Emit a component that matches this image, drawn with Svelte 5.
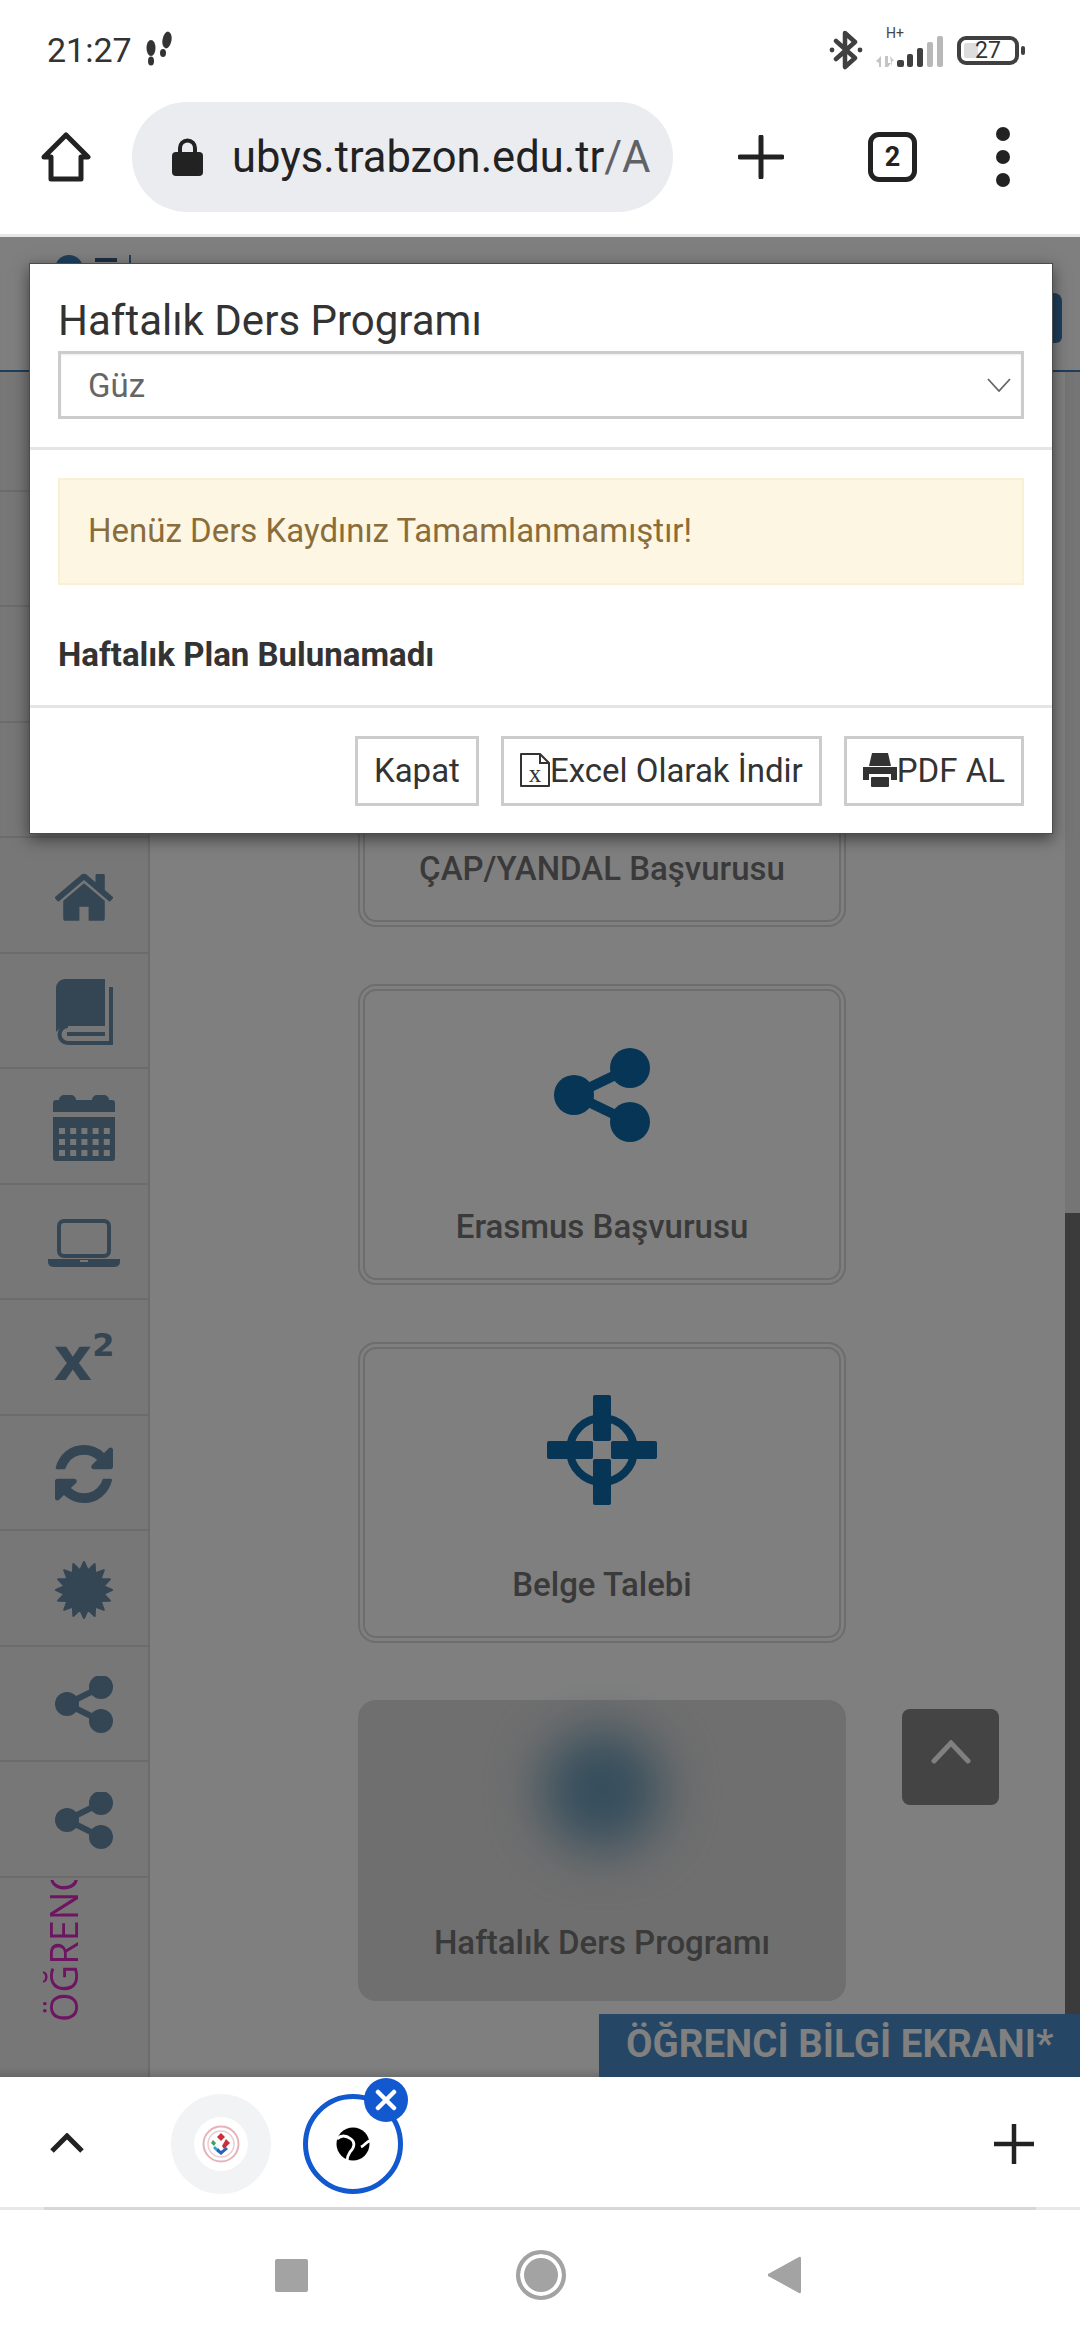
<script>
  const sideRows = ["", "", "", "", "home", "book", "calendar", "laptop", "sup", "sync", "badge", "share", "share"];

  const cards = [
    { label: "ÇAP/YANDAL Başvurusu", icon: "" },
    { label: "Erasmus Başvurusu", icon: "share" },
    { label: "Belge Talebi", icon: "cross" },
    { label: "Haftalık Ders Programı", icon: "blur" },
  ];

  const calCols = [0, 1, 2, 3, 4];
  const calRows = [0, 1, 2];

  // 16 pointed seal for the sidebar
  function sealPath() {
    const pts = [];
    for (let i = 0; i < 32; i++) {
      const r = i % 2 ? 20 : 28;
      const a = (i * Math.PI) / 16;
      pts.push((29 + r * Math.cos(a)).toFixed(1) + "," + (29 + r * Math.sin(a)).toFixed(1));
    }
    return pts.join(" ");
  }
</script>

<div class="phone">
  <div class="status">
    <div class="status-left">
      <span class="time">21:27</span>
      <svg class="steps" width="30" height="36" viewBox="0 0 30 36">
        <ellipse cx="7" cy="17" rx="4.5" ry="8" fill="#333" />
        <ellipse cx="7" cy="30" rx="3" ry="4.5" fill="#333" />
        <ellipse cx="23" cy="9" rx="4.5" ry="8.5" transform="rotate(10 23 9)" fill="#333" />
        <ellipse cx="19" cy="22" rx="3" ry="4" fill="#333" />
      </svg>
    </div>
    <div class="status-right">
      <svg class="bt" width="36" height="40" viewBox="0 0 36 40" fill="none" stroke="#404040" stroke-width="4.5" stroke-linejoin="round" stroke-linecap="round">
        <path d="M8 11 27 28 17 37V3L27 12 8 29" />
        <circle cx="4" cy="20" r="2.4" fill="#404040" stroke="none" />
        <circle cx="32" cy="20" r="2.4" fill="#404040" stroke="none" />
      </svg>
      <div class="signal">
        <span class="hplus">H+</span>
        <svg width="68" height="34" viewBox="0 0 68 34">
          <path d="M0 27l5-5v11H3v-4zM9 22h3v7h3l-3 4H9zM14 22l4 5h-2v6" fill="#c4c4c4" />
          <rect x="21" y="26" width="7" height="7" rx="2" fill="#404040" />
          <rect x="31" y="20" width="6" height="13" rx="2" fill="#404040" />
          <rect x="41" y="14" width="6" height="19" rx="2" fill="#404040" />
          <rect x="51" y="8" width="6" height="25" rx="2" fill="#b8b8b8" />
          <rect x="61" y="2" width="6" height="31" rx="2" fill="#b8b8b8" />
        </svg>
      </div>
      <div class="battery">
        <span class="battery-fill"></span>
        <span class="battery-num">27</span>
      </div>
      <span class="battery-nub"></span>
    </div>
  </div>

  <div class="toolbar">
    <svg class="home-btn" width="50" height="50" viewBox="0 0 50 50" fill="none" stroke="#222" stroke-width="5" stroke-linejoin="round">
      <path d="M25 3 47 25H40V47H10V25H3Z" />
    </svg>
    <div class="omnibox">
      <svg class="lock" width="31" height="38" viewBox="0 0 31 38">
        <path d="M8 16V10a7.500 7.500 0 0 1 15 0v6" fill="none" stroke="#222" stroke-width="4" />
        <rect x="0" y="14" width="31" height="24" rx="4" fill="#222" />
      </svg>
      <span class="url">ubys.trabzon.edu.tr<span class="url-rest">/A</span></span>
    </div>
    <svg class="tb-plus" width="46" height="44" viewBox="0 0 46 44" stroke="#222" stroke-width="5" stroke-linecap="round">
      <path d="M23 2V42M2 22H44" />
    </svg>
    <div class="tabs-btn">2</div>
    <div class="menu-dots"><i></i><i></i><i></i></div>
  </div>

  <div class="page">
    <div class="site-head">
      <span class="logo-dot"></span>
      <span class="logo-bar"></span>
      <span class="logo-line"></span>
      <span class="user-shape"></span>
    </div>

    <div class="site-body">
      <aside class="side">
        {#each sideRows as row}
          <div class="side-row">
            {#if row === "home"}
              <svg width="60" height="48" viewBox="64 230 1664 1310" preserveAspectRatio="none">
                <path fill="#688aa8" d="M1472 992v480q0 26-19 45t-45 19h-384v-384h-256v384h-384q-26 0-45-19t-19-45v-480q0-1 .5-3t.5-3l575-474 575 474q1 2 1 6zm223-69l-62 74q-8 9-21 11h-3q-13 0-21-7l-692-577-692 577q-12 8-24 7-13-2-21-11l-62-74q-8-10-7-23.5t11-21.5l719-599q32-26 76-26t76 26l244 204v-195q0-14 9-23t23-9h192q14 0 23 9t9 23v408l219 182q10 8 11 21.5t-7 23.5z" />
              </svg>
            {:else if row === "book"}
              <svg width="58" height="66" viewBox="0 0 58 66">
                <path fill="#688aa8" d="M1 9a9 9 0 0 1 9-9h40v47H13c-5 0-9 2-12 6z" />
                <path fill="none" stroke="#688aa8" stroke-width="4" d="M56 8V64H13a8.500 8.500 0 0 1 0-17" />
                <rect x="12" y="53" width="38" height="4" fill="#688aa8" />
              </svg>
            {:else if row === "calendar"}
              <svg width="62" height="66" viewBox="0 0 62 66">
                <path fill="#688aa8" d="M6 5a5 5 0 0 1 5-5h7a5 5 0 0 1 5 5h16a5 5 0 0 1 5-5h7a5 5 0 0 1 5 5h3a3 3 0 0 1 3 3v9H0V8a3 3 0 0 1 3-3z" />
                <path fill="#688aa8" d="M0 22h62v41a3 3 0 0 1-3 3H3a3 3 0 0 1-3-3z" />
                {#each calRows as y}
                  {#each calCols as x}
                    <rect x={6 + x * 11.200} y={33 + y * 11} width="6" height="6" fill="#eee" />
                  {/each}
                {/each}
              </svg>
            {:else if row === "laptop"}
              <svg width="72" height="48" viewBox="0 0 72 48">
                <rect x="11" y="2" width="50" height="35" rx="5" fill="none" stroke="#688aa8" stroke-width="4" />
                <path fill="#688aa8" d="M0 40h72v3a5 5 0 0 1-5 5H5a5 5 0 0 1-5-5z" />
                <rect x="32" y="41" width="8" height="2" fill="#eee" />
              </svg>
            {:else if row === "sup"}
              <span class="sup-icon">x<sup>2</sup></span>
            {:else if row === "sync"}
              <svg width="58" height="58" viewBox="128 128 1536 1536">
                <path fill="#688aa8" d="M1639 1056q0 5-1 7-64 268-268 434.500t-478 166.500q-146 0-282.500-55t-243.500-157l-129 129q-19 19-45 19t-45-19-19-45v-448q0-26 19-45t45-19h448q26 0 45 19t19 45-19 45l-137 137q71 66 161 102t187 36q134 0 250-65t186-179q11-17 53-117 8-23 30-23h192q13 0 22.500 9.500t9.500 22.500zm25-800v448q0 26-19 45t-45 19h-448q-26 0-45-19t-19-45 19-45l138-138q-148-137-349-137-134 0-250 65t-186 179q-11 17-53 117-8 23-30 23h-199q-13 0-22.500-9.500t-9.500-22.500v-7q65-268 270-434.500t480-166.500q146 0 284 55.500t245 156.500l130-129q19-19 45-19t45 19 19 45z" />
              </svg>
            {:else if row === "badge"}
              <svg width="58" height="58" viewBox="0 0 58 58">
                <polygon fill="#688aa8" stroke="#688aa8" stroke-width="2" stroke-linejoin="round" points={sealPath()} />
              </svg>
            {:else if row === "share"}
              <svg width="58" height="58" viewBox="0 0 58 58">
                <g fill="#688aa8">
                  <circle cx="12" cy="28" r="12" />
                  <circle cx="46" cy="11" r="12" />
                  <circle cx="46" cy="45" r="12" />
                </g>
                <path d="M12 28 46 11M12 28 46 45" stroke="#688aa8" stroke-width="6" />
              </svg>
            {/if}
          </div>
        {/each}
        <div class="side-title"><span>ÖĞRENCİ BİLGİ</span></div>
      </aside>

      <main class="cards">
        {#each cards as card}
          <div class="card" class:blurred={card.icon === "blur"}>
            <div class="card-icon">
              {#if card.icon === "share"}
                <svg width="96" height="96" viewBox="0 0 96 96">
                  <g fill="#0c6aaa">
                    <circle cx="20" cy="48" r="20" />
                    <circle cx="76" cy="21" r="20" />
                    <circle cx="76" cy="75" r="20" />
                  </g>
                  <path d="M20 48 76 21M20 48 76 75" stroke="#0c6aaa" stroke-width="10" />
                </svg>
              {:else if card.icon === "cross"}
                <svg class="cross" width="110" height="110" viewBox="0 0 110 110">
                  <circle cx="55" cy="55" r="32" fill="none" stroke="#0c6aaa" stroke-width="8" />
                  <g fill="#0c6aaa">
                    <rect x="46" y="0" width="18" height="46" rx="2" />
                    <rect x="46" y="64" width="18" height="46" rx="2" />
                    <rect x="0" y="46" width="46" height="18" rx="2" />
                    <rect x="64" y="46" width="46" height="18" rx="2" />
                  </g>
                </svg>
              {:else if card.icon === "blur"}
                <span class="blob"></span>
              {/if}
            </div>
            <div class="card-label">{card.label}</div>
          </div>
        {/each}
      </main>

      <div class="scroll-track"><span class="scroll-thumb"></span></div>
    </div>

    <div class="overlay"></div>
    <!-- these two sit on the dimmed page too, so they keep their place above content -->
    <button class="to-top" aria-label="Yukarı">
      <svg width="40" height="24" viewBox="0 0 40 24" fill="none" stroke="#808080" stroke-width="5" stroke-linecap="round"><path d="M3 21 20 3 37 21" /></svg>
    </button>
    <div class="banner">ÖĞRENCİ BİLGİ EKRANI*</div>

    <div class="modal">
      <div class="modal-head">
        <h4>Haftalık Ders Programı</h4>
        <div class="select">
          <span>Güz</span>
          <svg width="24" height="14" viewBox="0 0 24 14" fill="none" stroke="#666" stroke-width="1.800"><path d="M1 1 12 13 23 1" /></svg>
        </div>
      </div>
      <div class="modal-body">
        <div class="alert">Henüz Ders Kaydınız Tamamlanmamıştır!</div>
        <div class="no-plan">Haftalık Plan Bulunamadı</div>
      </div>
      <div class="modal-foot">
        <button class="btn">Kapat</button>
        <button class="btn">
          <svg width="30" height="34" viewBox="0 0 30 34" fill="none" stroke="#333" stroke-width="2">
            <path d="M1 1H20L29 10V33H1Z" stroke-linejoin="round" />
            <path d="M20 1V10H29" />
            <text x="15" y="29" font-size="25" font-family="'Liberation Serif', serif" text-anchor="middle" fill="#333" stroke="none">x</text>
          </svg>Excel Olarak İndir
        </button>
        <button class="btn">
          <svg width="34" height="34" viewBox="0 0 34 34" fill="#333">
            <path d="M9 0H25L28 13H6Z" />
            <path d="M0 14H34V27H28V21H6V27H0Z" />
            <rect x="8" y="24" width="18" height="10" rx="1" />
          </svg>PDF AL
        </button>
      </div>
    </div>
  </div>

  <div class="tabstrip">
    <svg class="strip-up" width="34" height="20" viewBox="0 0 34 20" fill="none" stroke="#222" stroke-width="5"><path d="M2 18 17 3 32 18" /></svg>
    <div class="tab-circle plain">
      <span class="favicon">
        <svg width="38" height="38" viewBox="0 0 38 38" fill="none">
          <circle cx="19" cy="19" r="17.500" stroke="#e3b4b8" stroke-width="2" />
          <circle cx="19" cy="19" r="13" stroke="#eccdd0" stroke-width="1.500" />
          <path d="M19 8l4 4-4 4-4-4z" fill="#c9303a" />
          <path d="M24 14l4 4-6 6-2-3z" fill="#c9303a" />
          <path d="M11 15l3 3-2 3-3-3z" fill="#3da35a" />
          <path d="M13 21l3 3-2 2-3-3z" fill="#2aa8c4" />
          <path d="M14 26l5 4 7-6-2-2-5 4-3-3z" fill="#2a62b8" />
        </svg>
      </span>
    </div>
    <div class="tab-circle active">
      <svg width="34" height="34" viewBox="0 0 34 34">
        <circle cx="17" cy="17" r="16.500" fill="#000" />
        <path d="M1 12C6 7 11 9 15 12 19 15 19 20 14 25 12 28 11 30 11 34M34 14C31 14 29 18 25 20" fill="none" stroke="#fff" stroke-width="2.800" />
      </svg>
      <span class="tab-close">
        <svg width="22" height="22" viewBox="0 0 22 22" stroke="#fff" stroke-width="4.500" stroke-linecap="round"><path d="M3 3 19 19M19 3 3 19" /></svg>
      </span>
    </div>
    <svg class="strip-plus" width="40" height="40" viewBox="0 0 40 40" stroke="#222" stroke-width="4.500"><path d="M20 0V40M0 20H40" /></svg>
  </div>

  <div class="navbar">
    <span class="nav-square"></span>
    <span class="nav-circle"></span>
    <svg class="nav-back" width="33" height="38" viewBox="0 0 33 38"><path d="M31 1a1.500 1.500 0 0 1 2 1V36a1.500 1.500 0 0 1-2 1L1 20.500a1.500 1.500 0 0 1 0-3z" fill="#a3a3a3" /></svg>
  </div>
</div>

<style>
  :global(body) {
    margin: 0;
    background: #fff;
  }
  .phone {
    width: 1080px;
    height: 2340px;
    display: flex;
    flex-direction: column;
    overflow: hidden;
    font-family: Roboto, "Liberation Sans", sans-serif;
    color: #333;
  }

  /* status bar */
  .status {
    height: 100px;
    flex: none;
    display: flex;
    justify-content: space-between;
    align-items: center;
    padding: 0 55px 0 47px;
  }
  .status-left { display: flex; align-items: center; gap: 12px; }
  .time { font-size: 34px; color: #333; }
  .steps { margin-top: -2px; }
  .status-right { display: flex; align-items: center; }
  .signal { position: relative; width: 68px; height: 34px; margin-left: 12px; margin-top: 2px; }
  .signal svg { display: block; }
  .hplus {
    position: absolute;
    left: 10px;
    top: -9px;
    font-size: 14px;
    line-height: 16px;
    color: #444;
  }
  .battery {
    position: relative;
    width: 62px;
    height: 29px;
    margin-left: 13px;
    box-sizing: border-box;
    border: 4px solid #404040;
    border-radius: 9px;
    display: flex;
    align-items: center;
    justify-content: center;
  }
  .battery-fill {
    position: absolute;
    left: 3px;
    top: 3px;
    bottom: 3px;
    width: 14px;
    background: #ddd;
    border-radius: 2px;
  }
  .battery-num { position: relative; font-size: 23px; line-height: 21px; color: #333; }
  .battery-nub { width: 4px; height: 9px; margin-left: 2px; background: #404040; border-radius: 2px; }

  /* browser toolbar */
  .toolbar {
    height: 114px;
    flex: none;
    display: flex;
    align-items: center;
    padding: 0 0 20px 41px;
    border-bottom: 3px solid #e6e6e6;
  }
  .omnibox {
    width: 541px;
    height: 110px;
    margin-left: 41px;
    padding-left: 40px;
    box-sizing: border-box;
    display: flex;
    align-items: center;
    gap: 29px;
    background: #ebecf0;
    border-radius: 55px;
    overflow: hidden;
  }
  .lock { flex: none; }
  .url { font-size: 43.5px; color: #222; white-space: nowrap; }
  .url-rest { color: #5f6368; }
  .tb-plus { margin-left: 65px; }
  .tabs-btn {
    width: 49px;
    height: 50px;
    margin-left: 84px;
    box-sizing: border-box;
    border: 5px solid #222;
    border-radius: 11px;
    display: flex;
    align-items: center;
    justify-content: center;
    font-size: 27px;
    font-weight: 700;
    color: #222;
  }
  .menu-dots {
    margin-left: 79px;
    display: flex;
    flex-direction: column;
    gap: 9px;
  }
  .menu-dots i { width: 14px; height: 14px; border-radius: 50%; background: #222; }

  /* dimmed page */
  .page {
    position: relative;
    height: 1840px;
    flex: none;
    overflow: hidden;
    background: #fff;
  }
  .site-head {
    height: 115px;
    display: flex;
    align-items: flex-start;
    border-bottom: 2px solid #3c7eb8;
    padding: 18px 0 0 55px;
  }
  .logo-dot { width: 28px; height: 28px; border-radius: 50%; background: #3c7eb8; }
  .logo-bar { width: 22px; height: 4px; margin: 3px 0 0 12px; background: #3a5f80; }
  .logo-line { width: 2px; height: 20px; margin-left: 12px; background: #3c7eb8; }
  .user-shape {
    width: 30px;
    height: 50px;
    margin: 38px 18px 0 auto;
    background: #3c7eb8;
    border-radius: 12px 8px 6px 6px;
  }
  .site-body {
    display: flex;
    height: 1705px;
  }
  .side {
    width: 150px;
    flex: none;
    box-sizing: border-box;
    padding-top: 4px;
    background: #eee;
    border-right: 2px solid #d8d8d8;
  }
  .side-row {
    height: 115.500px;
    box-sizing: border-box;
    border-bottom: 2px solid #d8d8d8;
    display: flex;
    align-items: center;
    justify-content: center;
    padding: 4px 0 0 20px;
  }
  .side-row svg { display: block; }
  .sup-icon {
    font-family: "DejaVu Sans", sans-serif;
    font-size: 60px;
    line-height: 1;
    font-weight: 700;
    color: #688aa8;
  }
  .sup-icon sup { font-size: 32px; font-weight: 700; vertical-align: 24px; line-height: 0; }
  .side-title {
    height: 142px;
    margin: 2px 0 0 43px;
  }
  .side-title span {
    display: block;
    height: 142px;
    overflow: hidden;
    white-space: nowrap;
    writing-mode: vertical-rl;
    transform: rotate(180deg);
    font-family: "Open Sans", sans-serif;
    font-size: 38px;
    line-height: 40px;
    color: #da2ac0;
  }
  .cards {
    flex: 1;
    display: flex;
    flex-direction: column;
    gap: 57px;
    padding: 254px 0 0 208px;
  }
  .card {
    width: 488px;
    height: 301px;
    flex: none;
    box-sizing: border-box;
    border: 7px double #dadada;
    border-radius: 18px;
    display: flex;
    flex-direction: column;
    align-items: center;
  }
  .card-icon {
    height: 194px;
    display: flex;
    align-items: flex-end;
    justify-content: center;
    flex: none;
    padding-bottom: 42px;
    box-sizing: border-box;
  }
  .card-icon svg { display: block; }
  .card-icon .cross { margin-bottom: -4px; }
  .card-label {
    font-size: 33px;
    font-weight: 500;
    line-height: 40px;
    color: #747474;
    margin-top: 22px;
    white-space: nowrap;
  }
  .card.blurred {
    border: none;
    background: #dedede;
    padding-top: 7px;
  }
  .blob {
    display: block;
    width: 120px;
    height: 120px;
    border-radius: 50%;
    background: #6a9ab8;
    filter: blur(26px);
    margin-bottom: 9px;
  }
  .scroll-track {
    width: 15px;
    margin-left: auto;
    flex: none;
    position: relative;
    background: #ebebeb;
  }
  .scroll-thumb {
    position: absolute;
    left: 0;
    right: 0;
    top: 841px;
    bottom: 0;
    background: #767676;
  }
  .overlay {
    position: absolute;
    inset: 0;
    background: rgba(0, 0, 0, 0.5);
    box-shadow: inset 0 -10px 10px -8px rgba(0, 0, 0, 0.2);
  }
  .to-top {
    position: absolute;
    left: 902px;
    top: 1472px;
    width: 97px;
    height: 96px;
    border: none;
    border-radius: 8px;
    background: #444;
    padding: 0 0 10px;
    display: flex;
    align-items: center;
    justify-content: center;
  }
  .banner {
    position: absolute;
    left: 599px;
    right: 0;
    bottom: 0;
    height: 63px;
    padding-left: 27px;
    background: #254664;
    color: #808080;
    font-size: 38.5px;
    font-weight: 700;
    line-height: 60px;
    white-space: nowrap;
  }

  /* modal */
  .modal {
    position: absolute;
    left: 29px;
    top: 26px;
    width: 1024px;
    box-sizing: border-box;
    background: #fff;
    border: 1px solid #4c4c4c;
    box-shadow: 0 5px 15px rgba(0, 0, 0, 0.5);
  }
  .modal-head {
    padding: 27px 28px 28px;
    border-bottom: 3px solid #e5e5e5;
  }
  h4 {
    margin: 0;
    font-size: 42px;
    font-weight: 400;
    line-height: 60px;
    color: #333;
    white-space: nowrap;
  }
  .select {
    height: 68px;
    box-sizing: border-box;
    border: 3px solid #ccc;
    display: flex;
    align-items: center;
    justify-content: space-between;
    padding: 0 10px 0 27px;
    font-size: 33px;
    color: #666;
    box-shadow: inset 0 1px 2px rgba(0, 0, 0, 0.08);
  }
  .modal-body { padding: 28px 28px 0; }
  .alert {
    height: 107px;
    box-sizing: border-box;
    border: 2px solid #faf0d4;
    background: #fdf6e3;
    color: #8a6d3b;
    padding: 0 0 3px 28px;
    display: flex;
    align-items: center;
    font-size: 33px;
  }
  .no-plan {
    height: 120px;
    box-sizing: border-box;
    padding-top: 19px;
    display: flex;
    align-items: center;
    font-size: 33px;
    font-weight: 700;
    color: #333;
  }
  .modal-foot {
    border-top: 3px solid #e5e5e5;
    padding: 28px 28px 27px;
    display: flex;
    justify-content: flex-end;
    gap: 22px;
  }
  .btn {
    height: 70px;
    box-sizing: border-box;
    border: 3px solid #ccc;
    background: #fff;
    padding: 0 16px 2px;
    display: flex;
    align-items: center;
    font-family: inherit;
    font-size: 33px;
    color: #333;
  }

  /* chrome tab group strip */
  .tabstrip {
    height: 133px;
    flex: none;
    position: relative;
    display: flex;
    align-items: center;
    padding-left: 50px;
    background: #fff;
    box-sizing: border-box;
  }
  .tabstrip::after {
    content: "";
    position: absolute;
    left: 0;
    right: 0;
    bottom: 0;
    height: 3px;
    background: linear-gradient(to right, #e8e9e6 44px, #d6d8d3 44px, #d6d8d3 1036px, #e8e9e6 1036px);
  }
  .strip-up { margin-top: -2px; }
  .tab-circle {
    position: relative;
    width: 100px;
    height: 100px;
    flex: none;
    box-sizing: border-box;
    border-radius: 50%;
    display: flex;
    align-items: center;
    justify-content: center;
    margin-top: 1px;
  }
  .tab-circle.plain { margin-left: 87px; background: #f1f3f4; }
  .tab-circle.active { margin-left: 32px; border: 5px solid #1259cf; }
  .favicon {
    width: 54px;
    height: 54px;
    border-radius: 50%;
    background: #fff;
    display: flex;
    align-items: center;
    justify-content: center;
  }
  .tab-close {
    position: absolute;
    left: 56px;
    top: -21px;
    width: 44px;
    height: 44px;
    border-radius: 50%;
    background: #1259cf;
    display: flex;
    align-items: center;
    justify-content: center;
  }
  .strip-plus { margin-left: auto; margin-right: 46px; }

  /* android nav */
  .navbar {
    height: 130px;
    flex: none;
    display: flex;
    align-items: center;
    padding-left: 275px;
  }
  .nav-square { width: 33px; height: 33px; border-radius: 2px; background: #a3a3a3; }
  .nav-circle {
    width: 50px;
    height: 50px;
    margin-left: 208px;
    box-sizing: border-box;
    border: 4px solid #a3a3a3;
    border-radius: 50%;
    background: #a3a3a3;
    box-shadow: inset 0 0 0 4px #fff;
  }
  .nav-back { margin-left: 202px; }
</style>
